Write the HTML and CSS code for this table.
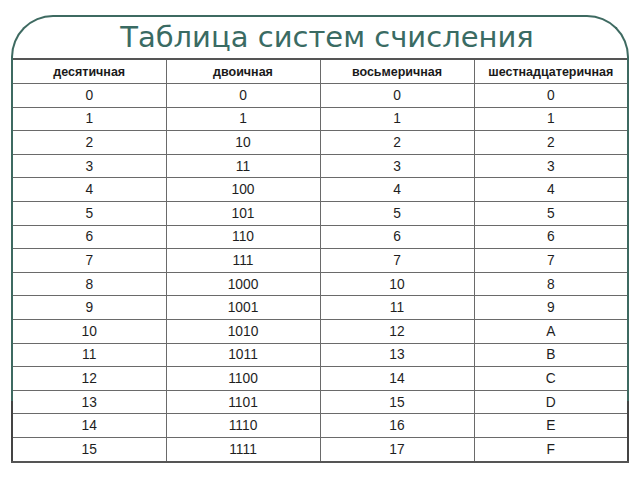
FILE: index.html
```html
<!DOCTYPE html>
<html lang="ru">
<head>
<meta charset="utf-8">
<link rel="stylesheet" href="styles.css">
</head>
<body>
<div class="slide">
  <h1 class="title">Таблица систем счисления</h1>
  <table class="numtable">
    <thead>
      <tr><th>десятичная</th><th>двоичная</th><th>восьмеричная</th><th>шестнадцатеричная</th></tr>
    </thead>
    <tbody>
      <tr><td>0</td><td>0</td><td>0</td><td>0</td></tr>
      <tr><td>1</td><td>1</td><td>1</td><td>1</td></tr>
      <tr><td>2</td><td>10</td><td>2</td><td>2</td></tr>
      <tr><td>3</td><td>11</td><td>3</td><td>3</td></tr>
      <tr><td>4</td><td>100</td><td>4</td><td>4</td></tr>
      <tr><td>5</td><td>101</td><td>5</td><td>5</td></tr>
      <tr><td>6</td><td>110</td><td>6</td><td>6</td></tr>
      <tr><td>7</td><td>111</td><td>7</td><td>7</td></tr>
      <tr><td>8</td><td>1000</td><td>10</td><td>8</td></tr>
      <tr><td>9</td><td>1001</td><td>11</td><td>9</td></tr>
      <tr><td>10</td><td>1010</td><td>12</td><td>A</td></tr>
      <tr><td>11</td><td>1011</td><td>13</td><td>B</td></tr>
      <tr><td>12</td><td>1100</td><td>14</td><td>C</td></tr>
      <tr><td>13</td><td>1101</td><td>15</td><td>D</td></tr>
      <tr><td>14</td><td>1110</td><td>16</td><td>E</td></tr>
      <tr><td>15</td><td>1111</td><td>17</td><td>F</td></tr>
    </tbody>
  </table>
</div>
</body>
</html>
```
FILE: styles.css
```css
html, body {
  margin: 0;
  padding: 0;
  background: #ffffff;
}
body {
  width: 640px;
  height: 480px;
  overflow: hidden;
}
.slide {
  position: relative;
  margin: 15px 11px 0 11px;
  width: 618px;
}
.slide::before {
  content: "";
  position: absolute;
  left: 0;
  top: 0;
  width: 618px;
  height: 386px;
  box-sizing: border-box;
  border: 2px solid #3e6a61;
  border-bottom: none;
  border-radius: 42px 42px 0 0;
  pointer-events: none;
  z-index: 2;
}
.title {
  margin: 0;
  padding: 1px 0 0 14px;
  height: 42px;
  line-height: 42px;
  font-family: "DejaVu Sans", sans-serif;
  font-weight: normal;
  font-size: 29px;
  color: #3a6b63;
  text-align: center;
}
.numtable {
  position: relative;
  z-index: 1;
  width: 618px;
  border-collapse: collapse;
  table-layout: fixed;
  font-family: "Liberation Sans", Arial, sans-serif;
  color: #1e1e1e;
  background: #ffffff;
}
.numtable th,
.numtable td {
  border: 1px solid #6a6a6a;
  text-align: center;
  padding: 0;
}
.numtable th {
  height: 23px;
  font-size: 12.5px;
  font-weight: bold;
  color: #1a1a1a;
  border-top: 2px solid #555;
}
.numtable td {
  height: 22.6px;
  font-size: 13.8px;
}
.numtable tbody tr:last-child td {
  border-bottom: 2px solid #555;
}
.numtable th:first-child,
.numtable td:first-child {
  border-left: 2px solid #444;
}
.numtable th:last-child,
.numtable td:last-child {
  border-right: 2px solid #444;
}
.numtable td + td,
.numtable th + th {
  border-left: 1.5px solid #3a3a3a;
}
```
